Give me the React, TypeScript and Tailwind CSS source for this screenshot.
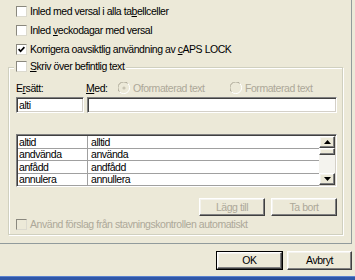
import React from 'react';

const sunken =
  'border border-t-[#808080] border-l-[#808080] border-b-white border-r-white shadow-[inset_1px_1px_0_#404040,inset_-1px_-1px_0_#d4d0c8]';
const raised =
  'border border-t-white border-l-white border-b-[#404040] border-r-[#404040] shadow-[inset_-1px_-1px_0_#808080,inset_1px_1px_0_#f4f3ee]';

function Check({ checked = false, disabled = false }: { checked?: boolean; disabled?: boolean }) {
  return (
    <span
      className={`w-[11px] h-[11px] shrink-0 flex items-center justify-center border border-t-[#8a887e] border-l-[#8a887e] border-b-[#dcdacf] border-r-[#dcdacf] ${
        disabled ? 'bg-[#ece9d8]' : 'bg-white'
      }`}
    >
      {checked && (
        <svg width="7" height="7" viewBox="0 0 7 7">
          <path d="M0.6 3.2 L2.6 5.3 L6.4 1.2" stroke="#000" strokeWidth="1.7" fill="none" />
        </svg>
      )}
    </span>
  );
}

function Radio({ dot = false }: { dot?: boolean }) {
  return (
    <svg width="12" height="12" viewBox="0 0 12 12" className="shrink-0">
      <circle cx="6" cy="6" r="5.5" fill="#ece9d8" />
      <path d="M1.6 9.9 A5.5 5.5 0 0 1 9.9 1.6" stroke="#a9a594" strokeWidth="1" fill="none" />
      <path d="M9.9 1.6 A5.5 5.5 0 0 1 1.6 9.9" stroke="#ffffff" strokeWidth="1" fill="none" />
      {dot && <circle cx="6" cy="6" r="1.6" fill="#c7c3b2" />}
    </svg>
  );
}

function Arrow({ up }: { up?: boolean }) {
  return (
    <svg width="7" height="4" viewBox="0 0 7 4">
      <path d={up ? 'M0 4 L3.5 0 L7 4 Z' : 'M0 0 L7 0 L3.5 4 Z'} fill="#000" />
    </svg>
  );
}

export default function App() {
  const rows = [
    ['altid', 'alltid'],
    ['andvända', 'använda'],
    ['anfådd', 'andfådd'],
    ['annulera', 'annullera'],
  ];

  return (
    <div className="w-[355px] h-[280px] bg-[#ece9d8] overflow-hidden flex flex-col text-[10.5px] tracking-[-0.45px] text-black font-['Liberation_Sans',Arial,sans-serif] leading-none">
      {/* tab page */}
      <div className="w-[352px] h-[244px] shrink-0 border-r border-b border-[#919b9c] pl-[8px] pt-[2px]">
        <div className="h-[19px] flex items-center gap-[3px] pl-[8px]">
          <Check />
          <span>
            Inled med versal i alla ta<u>b</u>ellceller
          </span>
        </div>
        <div className="h-[19px] flex items-center gap-[3px] pl-[8px]">
          <Check />
          <span>
            Inled <u>v</u>eckodagar med versal
          </span>
        </div>
        <div className="h-[19px] flex items-center gap-[3px] pl-[8px]">
          <Check checked />
          <span>
            Korrigera oavsiktlig användning av <u>c</u>APS LOCK
          </span>
        </div>

        {/* group box */}
        <div className="relative mt-[8px] w-[335px] h-[168px] border border-[#d0d0bf] shadow-[inset_1px_1px_0_#fff,1px_1px_0_#fff] pl-[7px] pr-[5px] pt-[13px]">
          <div className="absolute left-[5px] top-[-9px] h-[14px] px-[2px] bg-[#ece9d8] flex items-center gap-[3px]">
            <Check />
            <span>
              <u>S</u>kriv över befintlig text
            </span>
          </div>

          <div className="h-[14px] flex items-center">
            <span className="w-[70px]">
              E<u>r</u>sätt:
            </span>
            <span className="w-[32px]">
              <u>M</u>ed:
            </span>
            <span className="w-[112px] flex items-center gap-[3px] text-[#aca899]">
              <Radio dot />
              Oformaterad text
            </span>
            <span className="flex items-center gap-[3px] text-[#aca899]">
              <Radio />
              Formaterad text
            </span>
          </div>

          <div className="mt-[2px] h-[16px] flex gap-[3px]">
            <div className={`w-[68px] bg-white ${sunken} flex items-center pl-[2px]`}>alti</div>
            <div className={`flex-1 bg-white ${sunken}`} />
          </div>

          <div className={`mt-[21px] h-[53px] bg-white ${sunken} flex`}>
            <div className="flex-1 flex flex-col pl-[1px] pt-[1px]">
              {rows.map(([a, b], i) => (
                <div key={i} className="h-[12.5px] flex border-b border-[#a0a0a0]">
                  <span className="w-[70px] border-r border-[#a0a0a0] flex items-center pl-[1px]">{a}</span>
                  <span className="flex-1 flex items-center pl-[3px]">{b}</span>
                </div>
              ))}
            </div>
            <div className="w-[16px] mr-[1px] my-[1px] flex flex-col bg-[#f4f3ee]">
              <div className={`h-[12px] bg-[#ece9d8] ${raised} flex items-center justify-center`}>
                <Arrow up />
              </div>
              <div className={`h-[7px] bg-[#ece9d8] ${raised}`} />
              <div className="flex-1" />
              <div className={`h-[12px] bg-[#ece9d8] ${raised} flex items-center justify-center`}>
                <Arrow />
              </div>
            </div>
          </div>

          <div className="mt-[11px] h-[18px] flex justify-end gap-[6px]">
            <div className={`w-[66px] ${raised} flex items-center justify-center text-[#aca899]`}>Lägg till</div>
            <div className={`w-[66px] ${raised} flex items-center justify-center text-[#aca899]`}>Ta bort</div>
          </div>

          <div className="mt-[1px] h-[14px] flex items-center gap-[3px] text-[#aca899]">
            <Check disabled />
            <span>Använd förslag från stavningskontrollen automatiskt</span>
          </div>
        </div>
      </div>

      {/* dialog buttons */}
      <div className="mt-[7px] h-[19px] flex gap-[4px] pl-[216px]">
        <div className="w-[67px] border border-black flex">
          <div className={`flex-1 ${raised} flex items-center justify-center`}>OK</div>
        </div>
        <div className={`w-[65px] ${raised} flex items-center justify-center`}>Avbryt</div>
      </div>

      <div className="mt-auto h-[4px] bg-[#2f57a8] border-t border-[#5b82cf]" />
    </div>
  );
}
